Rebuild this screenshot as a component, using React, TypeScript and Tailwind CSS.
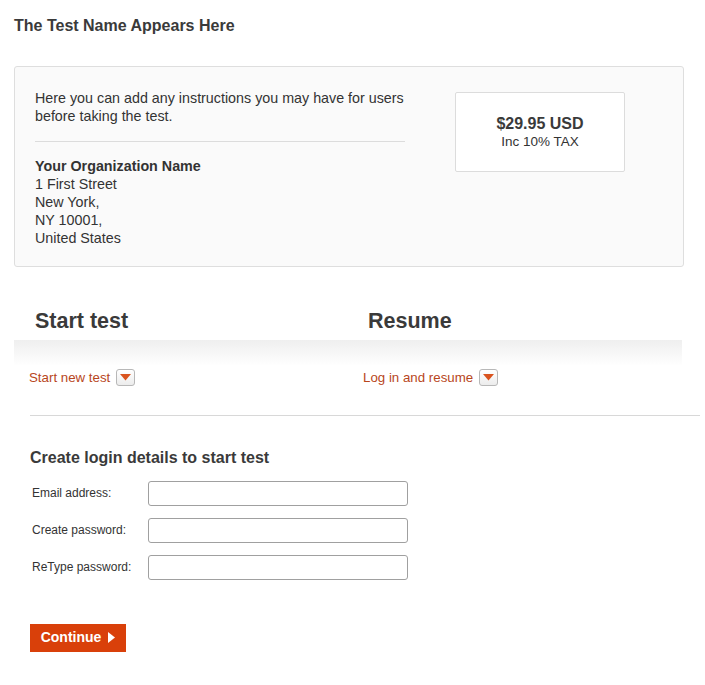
import React from 'react';

const Caret = () => (
  <span className="inline-flex items-center justify-center w-[19px] h-[17px] border border-[#b8b8b8] rounded-[3px] bg-gradient-to-b from-white to-[#ececec] ml-[6px] align-middle">
    <svg width="11" height="7" viewBox="0 0 11 7">
      <path d="M0 0 H11 L5.5 6.5 Z" fill="#d9531e" />
    </svg>
  </span>
);

const Field = ({ label, type }: { label: string; type: string }) => (
  <div className="flex items-center h-[25px]">
    <label className="w-[118px] pl-[2px] text-[12px] text-[#333]">{label}</label>
    <input
      type={type}
      className="w-[260px] h-[25px] border border-[#a0a0a0] rounded-[3px] bg-white outline-none px-1"
    />
  </div>
);

export default function App() {
  return (
    <div
      className="min-h-screen bg-white text-[#333] pt-[15px]"
      style={{ fontFamily: '"Liberation Sans", Arial, sans-serif' }}
    >
      <h1 className="ml-[14px] text-[16px] font-bold leading-[22px] text-[#3a3a3a]">
        The Test Name Appears Here
      </h1>

      <div className="ml-[14px] mt-[29px] w-[670px] h-[201px] bg-[#fafafa] border border-[#dedede] rounded-[3px] flex pt-[23px] pl-[20px]">
        <div className="w-[380px] text-[14.3px] text-[#333]">
          <p className="leading-[17.5px]">Here you can add any instructions you may have for users before taking the test.</p>
          <div className="w-[370px] border-t border-[#dcdcdc] mt-[16px] mb-[15px]" />
          <div className="leading-[18px]">
            <p className="font-bold">Your Organization Name</p>
            <p>1 First Street</p>
            <p>New York,</p>
            <p>NY 10001,</p>
            <p>United States</p>
          </div>
        </div>
        <div className="ml-[40px] mt-[2px] w-[170px] h-[80px] bg-white border border-[#dcdcdc] rounded-[2px] flex flex-col items-center justify-center">
          <div className="text-[16px] font-bold leading-[19px] text-[#3a3a3a]">$29.95 USD</div>
          <div className="text-[13.5px] leading-[17px] text-[#333]">Inc 10% TAX</div>
        </div>
      </div>

      <div className="ml-[14px] mt-[40px] w-[668px]">
        <div className="grid grid-cols-2">
          <h2 className="pl-[21px] text-[21.5px] font-bold leading-[28px] text-[#3a3a3a]">Start test</h2>
          <h2 className="pl-[20px] text-[21.5px] font-bold leading-[28px] text-[#3a3a3a]">Resume</h2>
        </div>
        <div className="h-[26px] mt-[5px] bg-gradient-to-b from-[#efefef] to-white" />
        <div className="grid grid-cols-2 mt-[2px]">
          <div className="pl-[15px] text-[13.3px] text-[#b8461c] flex items-center">
            Start new test <Caret />
          </div>
          <div className="pl-[15px] text-[13.3px] text-[#b8461c] flex items-center">
            Log in and resume <Caret />
          </div>
        </div>
      </div>

      <div className="ml-[30px] mt-[27px] w-[670px] border-t border-[#d8d8d8]" />

      <div className="ml-[30px] mt-[32px]">
        <h3 className="text-[16px] font-bold leading-[20px] text-[#3a3a3a]">
          Create login details to start test
        </h3>
        <div className="mt-[13px] flex flex-col gap-[12px]">
          <Field label="Email address:" type="email" />
          <Field label="Create password:" type="password" />
          <Field label="ReType password:" type="password" />
        </div>
        <button className="mt-[44px] w-[96px] h-[28px] bg-[#d9400a] text-white text-[14px] font-bold flex items-center justify-center gap-[7px]">
          Continue
          <svg width="7" height="11" viewBox="0 0 7 11">
            <path d="M0 0 L7 5.5 L0 11 Z" fill="#fff" />
          </svg>
        </button>
      </div>
    </div>
  );
}
